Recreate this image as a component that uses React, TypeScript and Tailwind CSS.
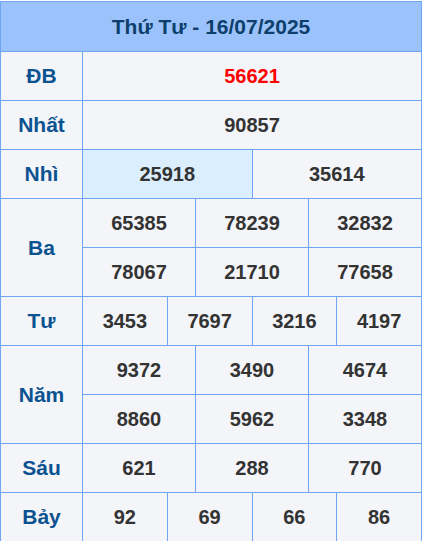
import React from "react";

const rows: { label: string; nums: string[]; red?: boolean }[][] = [
  [{ label: "ĐB", nums: ["56621"], red: true }],
  [{ label: "Nhất", nums: ["90857"] }],
  [{ label: "Nhì", nums: ["25918", "35614"] }],
  [
    { label: "Ba", nums: ["65385", "78239", "32832"] },
    { label: "Ba", nums: ["78067", "21710", "77658"] },
  ],
  [{ label: "Tư", nums: ["3453", "7697", "3216", "4197"] }],
  [
    { label: "Năm", nums: ["9372", "3490", "4674"] },
    { label: "Năm", nums: ["8860", "5962", "3348"] },
  ],
  [{ label: "Sáu", nums: ["621", "288", "770"] }],
  [{ label: "Bảy", nums: ["92", "69", "66", "86"] }],
];

const td = "border border-[#6ea6f3] text-center h-[49px] p-0";

export default function App() {
  return (
    <div className="pt-px bg-white" style={{ fontFamily: '"Liberation Sans", Arial, sans-serif' }}>
      <table className="w-[422px] table-fixed border-collapse bg-[#f4f5f9] font-bold text-[20px]">
        <colgroup>
          <col className="w-[82px]" />
          {Array.from({ length: 12 }).map((_, i) => (
            <col key={i} />
          ))}
        </colgroup>
        <thead>
          <tr>
            <th colSpan={13} className="border border-[#6ea6f3] bg-[#9bc2fb] h-[50px] text-[#0d3f6c] text-[21px] font-bold">
              Thứ Tư - 16/07/2025
            </th>
          </tr>
        </thead>
        <tbody>
          {rows.map((group) =>
            group.map((r, j) => (
              <tr key={r.label + j}>
                {j === 0 && (
                  <td rowSpan={group.length} className={`${td} text-[#0b5290] text-[21px]`}>
                    {r.label}
                  </td>
                )}
                {r.nums.map((n, k) => (
                  <td
                    key={k}
                    colSpan={12 / r.nums.length}
                    className={`${td} ${r.red ? "text-[#ff0000]" : "text-[#333333]"} ${
                      r.label === "Nhì" && k === 0 ? "bg-[#dbeefd]" : ""
                    }`}
                  >
                    {n}
                  </td>
                ))}
              </tr>
            ))
          )}
        </tbody>
      </table>
    </div>
  );
}
